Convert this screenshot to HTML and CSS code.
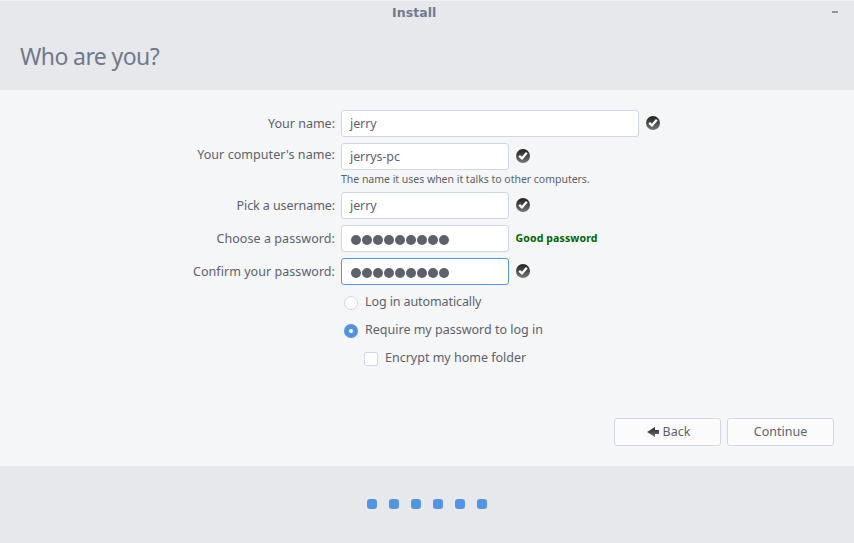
FILE: index.html
```html
<!DOCTYPE html>
<html lang="en">
<head>
<meta charset="utf-8">
<title>Install</title>
<link rel="stylesheet" href="styles.css">
</head>
<body>
<svg width="0" height="0" class="defs" aria-hidden="true">
  <defs>
    <linearGradient id="dark" x1="0" y1="0" x2="0" y2="1"><stop offset="0" stop-color="#202020"/><stop offset="1" stop-color="#777"/></linearGradient>
    <symbol id="check" viewBox="0 0 14 14"><circle cx="7" cy="7" r="7" fill="url(#dark)"/><path d="M3.2 6.8 6 9.4 10.8 3.8" fill="none" stroke="#fff" stroke-width="2.3"/></symbol>
  </defs>
</svg>
<div class="window">
  <header class="titlebar"><span class="title">Install</span><span class="minimize"></span></header>
  <div class="heading"><h1>Who are you?</h1></div>
  <main class="content">
    <div class="form">
      <div class="row"><label class="label">Your name:</label><div class="field wide">jerry</div><svg class="check"><use href="#check"/></svg></div>
      <div class="row"><label class="label l-computer">Your computer's name:</label><div class="field host">jerrys-pc</div><svg class="check"><use href="#check"/></svg></div>
      <div class="hint"><span>The name it uses when it talks to other computers.</span></div>
      <div class="row"><label class="label l-user">Pick a username:</label><div class="field">jerry</div><svg class="check"><use href="#check"/></svg></div>
      <div class="row"><label class="label l-choose">Choose a password:</label><div class="field dots"><i></i><i></i><i></i><i></i><i></i><i></i><i></i><i></i><i></i></div><span class="strength">Good password</span></div>
      <div class="row"><label class="label l-confirm">Confirm your password:</label><div class="field dots focus"><i></i><i></i><i></i><i></i><i></i><i></i><i></i><i></i><i></i></div><svg class="check"><use href="#check"/></svg></div>
      <div class="option"><span class="radio"></span><span class="text o-auto">Log in automatically</span></div>
      <div class="option"><span class="radio on"></span><span class="text">Require my password to log in</span></div>
      <div class="option sub"><span class="box"></span><span class="text">Encrypt my home folder</span></div>
    </div>
    <div class="actions">
      <div class="button"><svg class="arrow" viewBox="0 0 12 10"><path d="M0 5 8 0V3H12V7H8V10Z" fill="url(#dark)"/></svg><span>Back</span></div>
      <div class="button"><span>Continue</span></div>
    </div>
  </main>
  <footer class="progress"><i></i><i></i><i></i><i></i><i></i><i></i></footer>
</div>
</body>
</html>
```
FILE: styles.css
```css
* { box-sizing: border-box; }
body { margin: 0; font: 12.5px/18px "Noto Sans", sans-serif; color: #5c616c; background: #f5f6f8; }
.defs { position: absolute; }
.window { width: 854px; height: 543px; display: flex; flex-direction: column; overflow: hidden; white-space: nowrap; }
.titlebar { height: 25px; background: #e7e8eb; border-top: 1px solid #eff0f2; display: grid; grid-template-columns: 392px 1fr auto; align-items: center; padding: 0 16px 2px 0; }
.title { grid-column: 2; font: bold 12.5px/18px "DejaVu Sans", sans-serif; color: #727a90; padding-top: 2px; letter-spacing: .05px; }
.minimize { width: 6px; height: 2px; background: #8f97a3; }
.heading { height: 65px; background: #e7e8eb; padding: 14px 20px; }
h1 { margin: 0; font-size: 23px; line-height: 34px; font-weight: 400; font-stretch: 95%; letter-spacing: -.6px; color: #70788d; }
.content { height: 376px; padding: 20px 20px 0 0; display: flex; flex-direction: column; }
.form { height: 308px; }
.row { display: flex; height: 27px; margin-bottom: 6px; }
.label { width: 341px; padding: 5px 6px 0 0; text-align: right; }
.l-computer { padding-top: 3px; letter-spacing: .06px; }
.l-user { letter-spacing: -.08px; }
.l-choose { letter-spacing: .07px; }
.l-confirm { letter-spacing: .05px; }
.field { width: 168px; height: 27px; border: 1px solid #cfd6e6; border-radius: 3px; background: #fff; padding: 4px 8px; letter-spacing: -.1px; }
.wide { width: 298px; }
.focus { border-color: #5294e2; }
.check { width: 14px; height: 14px; margin: 6px 0 0 7px; }
.dots { display: flex; gap: 1px; padding: 9px 0 0 9px; }
.dots i { width: 10px; height: 10px; border-radius: 50%; background: #5c616c; }
.hint { height: 22px; margin-top: -6px; padding-left: 341px; font-size: 10.5px; line-height: 18px; letter-spacing: -.02px; }
.strength { margin: 4px 0 0 6.5px; font-size: 10.5px; font-weight: 700; letter-spacing: .14px; color: #006400; }
.option { display: flex; height: 28px; padding-left: 344px; gap: 7px; }
.sub { padding-left: 364px; }
.text { margin-top: 2px; }
.o-auto { letter-spacing: -.1px; }
.radio, .box { width: 14px; height: 14px; margin-top: 5px; border: 1px solid #cfd6e6; background: #fff; border-radius: 50%; }
.box { border-radius: 2px; }
.on { border: 5px solid #5294e2; }
.actions { display: flex; justify-content: flex-end; gap: 6px; }
.button { width: 107px; height: 28px; border: 1px solid #cfd6e6; border-radius: 3px; background: #fbfbfc; display: flex; align-items: center; justify-content: center; gap: 4px; }
.arrow { width: 12px; height: 10px; margin-left: 2px; }
.progress { flex: 1; background: #e7e8eb; display: flex; justify-content: center; gap: 12px; padding-top: 33px; }
.progress i { width: 10px; height: 10px; border-radius: 3px; background: #5294e2; }
```
